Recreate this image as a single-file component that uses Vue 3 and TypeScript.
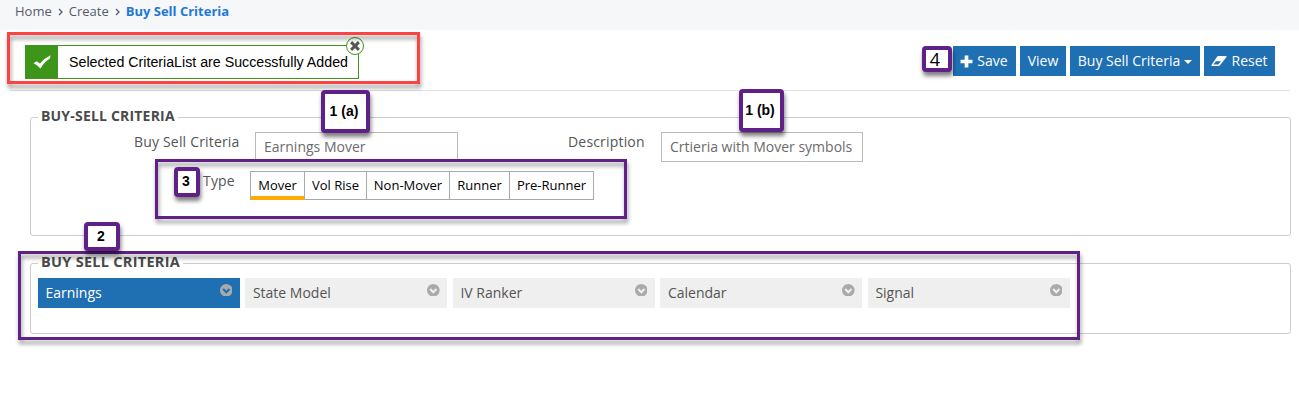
<script setup lang="ts">
interface Mark { id: string; label: string }

const crumbs: string[] = ['Home', 'Create']
const types: string[] = ['Mover', 'Vol Rise', 'Non-Mover', 'Runner', 'Pre-Runner']
const tiles: string[] = ['Earnings', 'State Model', 'IV Ranker', 'Calendar', 'Signal']
const marks: Mark[] = [
  { id: 'four', label: '4' },
  { id: 'one-a', label: '1 (a)' },
  { id: 'one-b', label: '1 (b)' },
  { id: 'three', label: '3' },
  { id: 'two', label: '2' },
]
</script>

<template>
  <div class="page">
    <nav class="crumbs">
      <template v-for="c in crumbs" :key="c">
        <span class="crumb" :class="c.toLowerCase()">{{ c }}</span>
        <svg class="sep" viewBox="0 0 6 8"><path d="M1 1l3 3-3 3" /></svg>
      </template>
      <b class="current"><span>Buy Sell Criteria</span></b>
    </nav>

    <header class="toolbar">
      <div class="alert">
        <div class="tick">
          <svg viewBox="0 0 18 14"><path d="M0.5 8.3L3.5 6.2 7 8.6Q11 3.2 17.5 0.2L17 3.6Q11.500 6.500 7.500 13.500Q4.500 10 0.500 8.300Z" /></svg>
        </div>
        <span class="alert-text">Selected CriteriaList are Successfully Added</span>
        <div class="close"><svg viewBox="0 0 9 9"><path d="M1 1l7 7M8 1l-7 7" /></svg></div>
      </div>
      <div class="buttons">
        <button class="btn save"><svg viewBox="0 0 12 12"><path d="M4.300 0.500h3.400v3.800h3.800v3.400H7.700v3.800H4.300V7.700H0.500V4.300h3.800z" /></svg><span>Save</span></button>
        <button class="btn view"><span>View</span></button>
        <button class="btn menu"><span>Buy Sell Criteria</span><i class="caret"></i></button>
        <button class="btn reset"><svg viewBox="0 0 16 12"><path fill-rule="evenodd" d="M7.500 1h7.500q1 0 0.500 1L9 10.200q-0.500 0.800-1.500 0.800H1q-1 0-0.500-1L6 1.800Q6.600 1 7.500 1zM5 6.300L2.300 9.600h5L10 6.300z" /></svg><span>Reset</span></button>
      </div>
    </header>

    <section class="panel first">
      <h2 class="legend"><span>BUY-SELL CRITERIA</span></h2>
      <div class="fields">
        <label class="lbl l1">Buy Sell Criteria</label>
        <div class="field f1">Earnings Mover</div>
        <label class="lbl l2">Description</label>
        <div class="field f2">Crtieria with Mover symbols</div>
      </div>
      <div class="type-row">
        <label class="lbl l3">Type</label>
        <div class="segments">
          <div v-for="(t, i) in types" :key="t" class="seg" :class="['s' + i, { on: i === 0 }]">{{ t }}</div>
        </div>
      </div>
    </section>

    <section class="panel second">
      <h2 class="legend"><span>BUY SELL CRITERIA</span></h2>
      <div class="tiles">
        <div v-for="(t, i) in tiles" :key="t" class="tile" :class="{ active: i === 0 }">
          <span>{{ t }}</span>
          <svg class="chev" viewBox="0 0 12 12"><circle cx="6" cy="6" r="6" /><path d="M3 4.800l3 3 3-3" /></svg>
        </div>
      </div>
    </section>

    <div class="frame red"></div>
    <div class="frame type-frame"></div>
    <div class="frame tile-frame"></div>
    <div v-for="m in marks" :key="m.id" class="mark" :class="m.id">{{ m.label }}</div>
  </div>
</template>

<style>
body { margin: 0; background: #fff; }
</style>

<style scoped>
* { box-sizing: border-box; }
.page { position: relative; width: 1299px; height: 417px; overflow: hidden; background: #fff; font-family: "Open Sans", sans-serif; font-size: 14px; color: #555; white-space: nowrap; }
.crumbs { height: 30px; padding: 0 0 8px 15px; background: #f6f7f9; display: flex; align-items: center; font-size: 13px; color: #555b6b; }
.sep { width: 6px; height: 8px; margin: 2px 5px 0 6px; fill: none; stroke: #555b6b; stroke-width: 1.300; }
.current { color: #1f78d8; }
.toolbar { height: 61px; margin: 0 9px 0 10px; border-bottom: 1px solid #e2e2e2; display: flex; justify-content: space-between; padding: 15px 15px 0 15px; }
.alert { position: relative; width: 334px; height: 34px; border: 1px solid #3d9519; display: flex; align-items: center; color: #000; font: 14.220px "Liberation Sans", sans-serif; }
.tick { width: 32px; height: 32px; background: #3d9519; display: flex; align-items: center; justify-content: center; margin-right: 11px; }
.tick svg { width: 18px; height: 14px; fill: #fff; }
.close { position: absolute; left: 320px; top: -9px; width: 18px; height: 18px; border: 1px solid #3d9519; border-radius: 50%; background: #fff; display: flex; align-items: center; justify-content: center; }
.close svg { width: 10px; height: 10px; stroke: #555; stroke-width: 2.600; }
.buttons { display: flex; gap: 4px; padding-top: 1px; }
.btn { height: 30px; border: 0; padding: 0 0 1px; background: #1f6fb3; color: #fff; font: 14px "Open Sans", sans-serif; display: flex; align-items: center; justify-content: center; }
.save { width: 63px; } .view { width: 46px; } .menu { width: 130px; } .reset { width: 71px; }
.btn span { margin-top: -1px; }
.btn svg { fill: #fff; }
.save svg { width: 13px; height: 13px; margin: 1px 4px 0 -1px; }
.reset svg { width: 16px; height: 12px; margin: 1px 4px 0 0; }
.caret { border: 4px solid transparent; border-top-color: #fff; border-bottom: 0; margin: 3px 0 0 4px; }
.panel { margin: 0 8px 0 30px; border: 1px solid #ccc; border-radius: 3px; }
.first { height: 119px; margin-top: 26px; }
.second { height: 71px; margin-top: 27px; }
.legend { height: 20px; width: max-content; margin: -12px 0 0 7px; padding: 0 3px; background: #fff; font-size: 14px; line-height: 20px; font-weight: 700; color: #4a4a4a; letter-spacing: 0.190px; }
.second .legend { font-size: 14.500px; letter-spacing: 0.280px; }
.fields { display: flex; height: 36px; padding-top: 6px; }
.lbl { line-height: 20px; letter-spacing: 0.180px; }
.l1 { margin-left: 103px; width: 121px; }
.field { border: 1px solid #bbb; height: 30px; line-height: 28px; padding-left: 8px; color: #6b6b6b; background: #fff; }
.f1 { width: 203px; } .f2 { width: 202px; }
.l2 { margin-left: 110px; width: 93px; }
.type-row { display: flex; padding-top: 9px; }
.l3 { margin-left: 172px; width: 47px; }
.segments { display: flex; height: 29px; width: 344px; border: 1px solid #aaa; }
.seg { border-right: 1px solid #aaa; font-size: 13px; line-height: 27px; color: #000; text-align: center; }
.seg:last-child { border-right: 0; }
.s0 { width: 54px; } .s1 { width: 62px; } .s2 { width: 83px; } .s3 { width: 60px; } .s4 { width: 83px; }
.seg.on { box-shadow: inset 0 -3px #ffab00, 0 1px #ffab00, -1px 1px #ffab00; clip-path: inset(0 0 -1px 0); }
.tiles { display: flex; gap: 5.500px; padding: 6px 0 0 6.900px; }
.tile { width: 202px; height: 30px; background: #efefef; display: flex; justify-content: space-between; padding: 0 7.500px; line-height: 30px; }
.chev { width: 12.600px; height: 12.600px; margin-top: 5.700px; fill: #aaa; }
.chev path { fill: none; stroke: #efefef; stroke-width: 2; }
.tile.active { background: #1f6fb3; color: #fff; }
.active .chev path { stroke: #1f6fb3; }
.frame { position: absolute; border: 3px solid #5f2088; filter: drop-shadow(1px 4px 2px rgba(0, 0, 0, 0.4)); }
.red { left: 7px; top: 32px; width: 413px; height: 52px; border-color: #fc4343; }
.type-frame { left: 155px; top: 159px; width: 472px; height: 60px; }
.tile-frame { left: 18px; top: 251px; width: 1062px; height: 89px; }
.mark { position: absolute; border: 4px solid #5f2088; border-radius: 4px; background: #fff; color: #000; font: bold 14px "Liberation Sans", sans-serif; display: flex; align-items: center; justify-content: center; box-shadow: 1px 4px 4px rgba(0, 0, 0, 0.5); }
.four { left: 922px; top: 46px; width: 30px; height: 26px; font: 18px "Open Sans", sans-serif; padding-right: 4px; }
.one-a { left: 321px; top: 90px; width: 49px; height: 43px; padding-right: 3px; padding-bottom: 1px; }
.one-b { left: 739px; top: 89px; width: 45px; height: 43px; padding-right: 3px; padding-bottom: 1px; }
.three { left: 174px; top: 167px; width: 26px; height: 30px; padding: 0 2px 2px 0; }
.two { left: 84px; top: 222px; width: 36px; height: 29px; padding: 0 2px 2px 0; }
</style>
